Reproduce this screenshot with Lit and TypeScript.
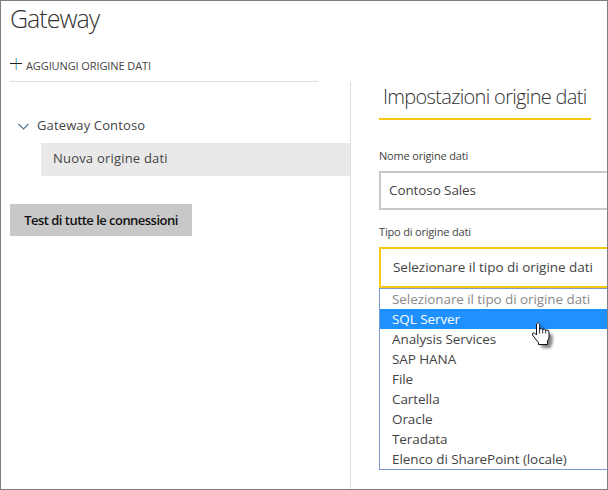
import { LitElement, html, css } from "lit";
import { customElement, property } from "lit/decorators.js";

@customElement("source-options")
export class SourceOptions extends LitElement {
  @property({ type: Array }) options: string[] = [];
  @property({ type: Number }) active = 0;

  static styles = css`
    :host {
      display: block;
      box-sizing: border-box;
      border: 1px solid #7a9ad0;
      background: #fff;
    }
    .option {
      height: 20px;
      line-height: 20px;
      padding-left: 12px;
      white-space: nowrap;
      color: #444;
    }
    .placeholder {
      color: #8a8a8a;
    }
    .active {
      background: #1e90ff;
      color: #fff;
    }
  `;

  render() {
    return this.options.map(
      (label, i) =>
        html`<div class="option ${i === 0 ? "placeholder" : ""} ${i === this.active ? "active" : ""}">${label}</div>`
    );
  }
}

@customElement("app-root")
export class AppRoot extends LitElement {
  private sources = [
    "Selezionare il tipo di origine dati",
    "SQL Server",
    "Analysis Services",
    "SAP HANA",
    "File",
    "Cartella",
    "Oracle",
    "Teradata",
    "Elenco di SharePoint (locale)",
  ];

  static styles = css`
    :host {
      display: flex;
      flex-direction: column;
      position: relative;
      box-sizing: border-box;
      width: 608px;
      height: 490px;
      border: 1px solid #7f7f7f;
      background: #fff;
      overflow: hidden;
      font-family: "Open Sans", "Noto Sans", sans-serif;
      color: #444;
    }
    .title {
      margin: 0 0 23px 9px;
      font-size: 25px;
      font-weight: 300;
      line-height: 34px;
      letter-spacing: -1px;
      color: #333;
    }
    .add {
      display: flex;
      gap: 3px;
      width: 308px;
      margin-left: 9px;
      padding-bottom: 7px;
      border-bottom: 1px solid #ddd;
      font-size: 11px;
      line-height: 16px;
      letter-spacing: -0.1px;
    }
    .add svg {
      width: 13px;
      height: 13px;
    }
    .body {
      display: flex;
      flex: 1;
      min-height: 0;
    }
    .side {
      box-sizing: border-box;
      width: 350px;
      padding-top: 33px;
      border-right: 1px solid #ddd;
      font-size: 13px;
    }
    .node {
      display: flex;
      align-items: center;
      gap: 8px;
      padding-left: 17px;
      height: 20px;
      line-height: 20px;
      letter-spacing: 0.13px;
    }
    .node svg {
      width: 11px;
      height: 8px;
      margin-top: 3px;
    }
    .leaf {
      box-sizing: border-box;
      height: 33px;
      margin: 8px 0 28px 40px;
      padding-left: 12px;
      line-height: 30px;
      letter-spacing: 0.2px;
      background: #e9e9e9;
    }
    .test {
      display: block;
      width: 182px;
      height: 32px;
      margin-left: 9px;
      padding: 0;
      border: 0;
      background: #c8c8c8;
      color: #111;
      font: 600 13px/32px "Open Sans", sans-serif;
      letter-spacing: -0.53px;
    }
    .form {
      flex: 1;
      min-width: 0;
      padding-left: 28px;
    }
    .heading {
      width: 208px;
      margin: 0 0 28px;
      padding: 0 0 6px 4px;
      border-bottom: 2px solid #f2c811;
      font-size: 20px;
      font-weight: 300;
      line-height: 30px;
      letter-spacing: -0.68px;
      white-space: nowrap;
      color: #333;
    }
    .label {
      display: block;
      margin-bottom: 7px;
      font-size: 11px;
      line-height: 16px;
      letter-spacing: -0.18px;
    }
    .field {
      box-sizing: border-box;
      width: 240px;
      height: 39px;
      margin-bottom: 14px;
      padding-left: 8px;
      border: 2px solid #c8c8c8;
      line-height: 35px;
      font-size: 13.5px;
      letter-spacing: -0.1px;
      white-space: nowrap;
    }
    .select {
      position: relative;
      height: 41px;
      padding-left: 12px;
      border-color: #f2c811;
      line-height: 37px;
      letter-spacing: -0.03px;
    }
    source-options {
      position: absolute;
      top: 39px;
      left: -2px;
      width: 240px;
      line-height: 20px;
      letter-spacing: -0.08px;
    }
    .pointer {
      position: absolute;
      left: 530px;
      top: 318px;
      width: 26px;
      height: 32px;
    }
  `;

  render() {
    return html`
      <div class="title">Gateway</div>
      <div class="add">
        <svg viewBox="0 0 13 13">
          <path d="M5.500 0v12" stroke="#fbd9a8" />
          <path d="M6.500 0v12" stroke="#5cc4f5" />
          <path d="M0 5.500h12" stroke="#222" />
        </svg>
        <span>AGGIUNGI ORIGINE DATI</span>
      </div>
      <div class="body">
        <div class="side">
          <div class="node">
            <svg viewBox="0 0 11 8" fill="none">
              <path d="M.5 1l5 5 5-5" stroke="#56728c" stroke-width="1.1" />
            </svg>
            <span>Gateway Contoso</span>
          </div>
          <div class="leaf">Nuova origine dati</div>
          <button class="test">Test di tutte le connessioni</button>
        </div>
        <div class="form">
          <div class="heading">Impostazioni origine dati</div>
          <span class="label">Nome origine dati</span>
          <div class="field">Contoso Sales</div>
          <span class="label">Tipo di origine dati</span>
          <div class="field select">
            ${this.sources[0]}
            <source-options .options=${this.sources} .active=${1}></source-options>
          </div>
        </div>
      </div>
      <svg class="pointer" viewBox="0 0 26 32">
        <defs>
          <filter id="soft" x="-40%" y="-40%" width="180%" height="180%">
            <feGaussianBlur stdDeviation="1.5" />
          </filter>
        </defs>
        <path
          d="M5.500 14V5q1.500-3 3 0v5l9 1.500v8L15.500 25H7.500L2 15q0-2 3.500-1z"
          transform="translate(4 4)"
          fill="#000"
          opacity=".5"
          filter="url(#soft)"
        />
        <path
          d="M5.500 16V5q1.500-2.800 3.200 0v5q1.600-1 3 .5 1.600-.9 3 .5 3.300-.6 3.300 2v6l-1.500 3v3.500H7.500V23.500L4.500 20 1.500 16q-.4-2.500 1.800-2.200z"
          fill="#fff"
          stroke="#112"
        />
        <path d="M8.600 9v5.500M11.700 10.500v4M14.700 11v3.500" stroke="#112" stroke-width=".9" />
      </svg>
    `;
  }
}
